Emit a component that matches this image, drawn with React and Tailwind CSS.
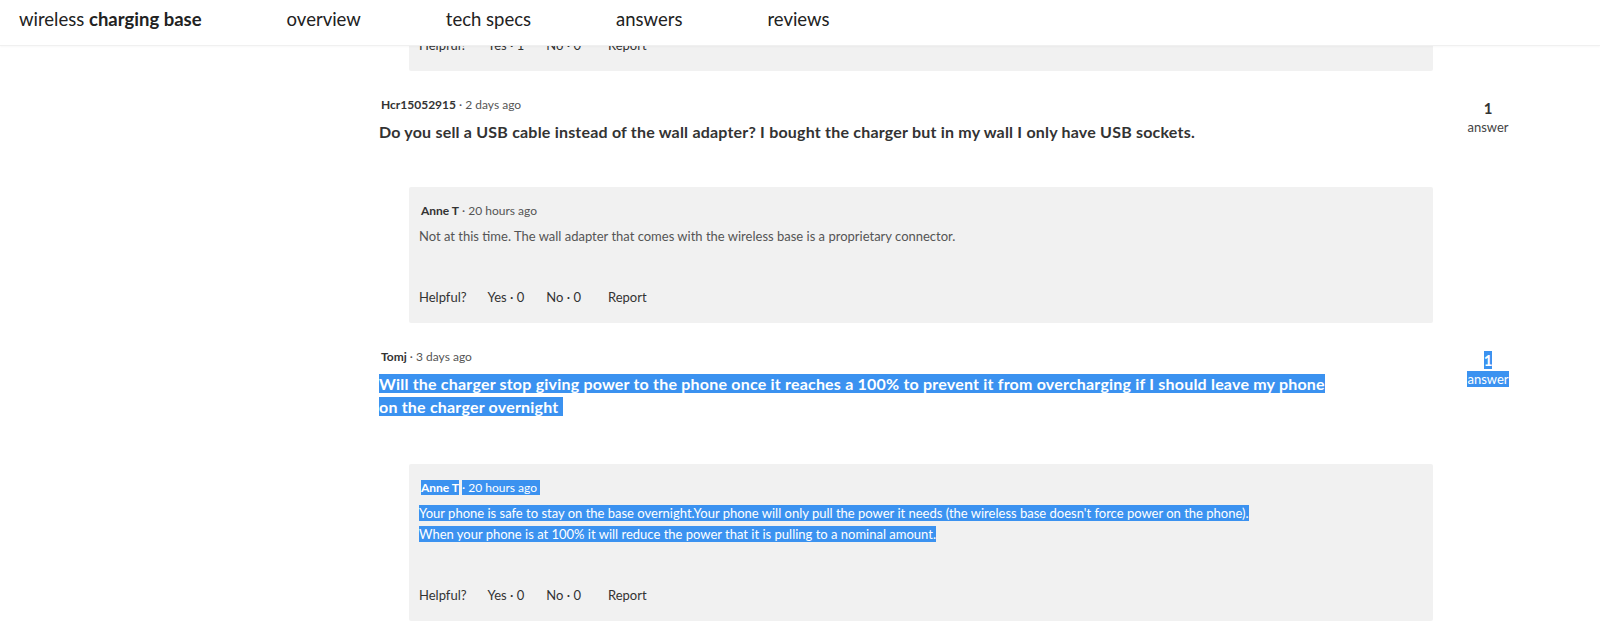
import React from 'react';

const font = { fontFamily: 'Lato, "Open Sans", Arial, sans-serif' };

const Sel = ({ on, children }) =>
  on ? <span className="bg-[#3b92f0] text-white">{children}</span> : <>{children}</>;

const HelpfulRow = ({ yes = 0, no = 0 }) => (
  <div className="flex items-center text-[13px] leading-[18px] text-[#333]">
    <span>Helpful?</span>
    <span className="ml-[21px]">Yes · {yes}</span>
    <span className="ml-[22px]">No · {no}</span>
    <span className="ml-[27px]">Report</span>
  </div>
);

const AnswerCard = ({ author, time, lines, selected, gap = 'mt-[44px]' }) => (
  <div className={`${gap} ml-[30px] w-[1024px] rounded-[2px] bg-[#f1f1f1] pl-[10px] pt-[16px] pb-[17px]`}>
    <div className={`ml-[2px] text-[12px] leading-4 ${selected ? 'text-white' : 'text-[#555]'}`}>
      <Sel on={selected}>
        <span className={`font-bold ${selected ? 'text-white' : 'text-[#333]'}`}>{author}</span>
      </Sel>{' '}
      <Sel on={selected}>· {time}{'\u00a0'}</Sel>
    </div>
    <p className="mt-[7px] text-[13px] leading-[21px] text-[#555]">
      {lines.map((line, i) => (
        <React.Fragment key={i}>
          <Sel on={selected}>{line}</Sel>
          {i < lines.length - 1 && <br />}
        </React.Fragment>
      ))}
    </p>
    <div className="mt-[41px]">
      <HelpfulRow />
    </div>
  </div>
);

const Question = ({ author, time, text, answers, selected, children }) => (
  <div className="mt-[26px] flex">
    <div className="flex-1">
      <div className="ml-[2px] text-[12px] leading-4 text-[#555]">
        <span className="font-bold text-[#333]">{author}</span> · {time}
      </div>
      <h3 className="mt-[7px] max-w-[952px] text-[16px] font-bold leading-[23px] tracking-[0.2px] text-[#333]">
        <Sel on={selected}>{text}</Sel>
      </h3>
      {children}
    </div>
    <div className="flex w-[100px] flex-col items-center pt-[2px]">
      <span className="text-[15px] font-bold leading-[19px] text-[#333]">
        <Sel on={selected}>{answers}</Sel>
      </span>
      <span className="text-[13px] leading-[18px] text-[#444]">
        <Sel on={selected}>answer</Sel>
      </span>
    </div>
  </div>
);

export default function App() {
  return (
    <div className="h-[628px] overflow-hidden bg-white" style={font}>
      <header className="relative z-10 flex h-[46px] items-center gap-[85px] border-b border-[#f0f0f0] bg-white pb-[6px] pl-[19px] text-[18.5px] text-[#222] shadow-[0_1px_2px_rgba(0,0,0,0.03)]">
        <div>
          wireless <span className="font-bold">charging base</span>
        </div>
        <span>overview</span>
        <span>tech specs</span>
        <span>answers</span>
        <span>reviews</span>
      </header>

      <main className="-mt-[10px] grid grid-cols-[379px_1159px]">
        <div />
        <div>
          <div className="ml-[30px] w-[1024px] overflow-hidden rounded-[2px] bg-[#f1f1f1] pl-[10px] pb-[17px]">
            <HelpfulRow yes={1} />
          </div>

          <Question
            author="Hcr15052915"
            time="2 days ago"
            text="Do you sell a USB cable instead of the wall adapter? I bought the charger but in my wall I only have USB sockets."
            answers={1}
          >
            <AnswerCard
              author="Anne T"
              time="20 hours ago"
              lines={['Not at this time. The wall adapter that comes with the wireless base is a proprietary connector.']}
            />
          </Question>

          <Question
            author="Tomj"
            time="3 days ago"
            text={'Will the charger stop giving power to the phone once it reaches a 100% to prevent it from overcharging if I should leave my phone on the charger overnight\u00a0'}
            answers={1}
            selected
          >
            <AnswerCard
              author="Anne T"
              time="20 hours ago"
              selected
              gap="mt-[46px]"
              lines={[
                "Your phone is safe to stay on the base overnight.Your phone will only pull the power it needs (the wireless base doesn't force power on the phone).",
                'When your phone is at 100% it will reduce the power that it is pulling to a nominal amount.',
              ]}
            />
          </Question>
        </div>
      </main>
    </div>
  );
}
